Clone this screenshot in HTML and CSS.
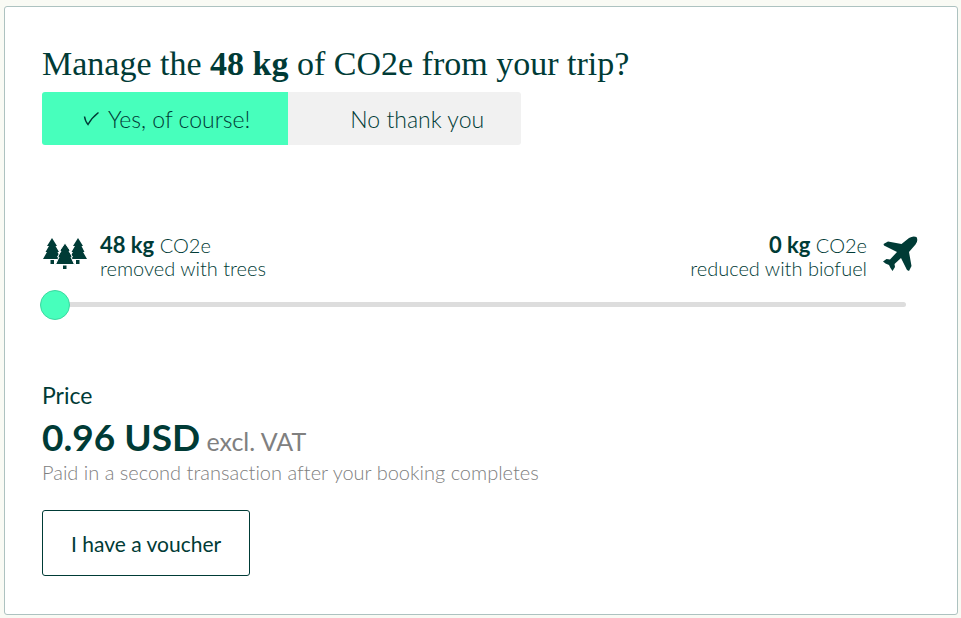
FILE: index.html
```html
<!DOCTYPE html>
<html lang="en">
<head>
    <meta charset="UTF-8">
    <meta name="viewport" content="width=device-width, initial-scale=1.0">
    <title>Manage your CO2e</title>
    <link rel="stylesheet" href="styles.css">
</head>
<body>
    <main class="card">
        <h1 class="title">Manage the <strong>48 kg</strong> of CO2e from your trip?</h1>

        <div class="choices">
            <button type="button" class="choice selected" aria-pressed="true">
                <span class="check">
                    <svg width="17" height="16" viewBox="0 0 17 16" aria-hidden="true">
                        <path d="M1.500 5.500C2 8.500 3 11.500 5 13.500C7.500 9 11 5 15.500 1.500" fill="none" stroke="currentColor" stroke-width="1.500"/>
                    </svg>
                </span>
                Yes, of course!
            </button>
            <button type="button" class="choice" aria-pressed="false">
                <span class="check"></span>
                No thank you
            </button>
        </div>

        <div class="split">
            <div class="side">
                <svg class="trees" width="44" height="32" viewBox="0 0 44 32" aria-hidden="true">
                    <path d="M9 0L14 8H12.500L16 14H14.500L18 21H0L4 14H2.500L6 8H4ZM7.500 22H11V26H7.500ZM35 0L40 8H38.500L41.500 14H40L44 21H26L30 14H28.500L32 8H30ZM33 22H36.500V26H33Z"/>
                    <path class="front" d="M22 5L27.500 13H26L29.500 19H28L31.500 26.500H12.500L16 19H14.500L18 13H16.500Z"/>
                    <path d="M20 27.500H23.500V31H20Z"/>
                </svg>
                <label for="split"><strong>48 kg</strong> CO2e<br>removed with trees</label>
            </div>
            <div class="side right">
                <label for="split"><strong>0 kg</strong> CO2e<br>reduced with biofuel</label>
                <svg class="plane" width="35" height="36" viewBox="0 0 35 36" aria-hidden="true">
                    <path d="M0.500 8L5 5.500L18.500 8L26 2Q30 -0.500 33.500 1Q35.500 4.500 32.500 8.500L26 16L28.500 30L26 35L24 34L18 22L11.500 28L12 31L9.500 35L7.500 32L6 29L2.500 27.500L0 25.500L3.500 23L7 23.500L14 16L1 9.500Z"/>
                </svg>
            </div>
        </div>
        <input type="range" id="split" class="slider" min="0" max="48" value="0">

        <section class="price">
            <h2 class="price-label">Price</h2>
            <p class="amount"><strong>0.96 USD</strong> excl. VAT</p>
            <p class="note">Paid in a second transaction after your booking completes</p>
        </section>

        <button type="button" class="voucher">I have a voucher</button>
    </main>
</body>
</html>
```
FILE: styles.css
```css
* {
    box-sizing: border-box;
}
body {
    margin: 0;
    padding: 6px 3px 3px 4px;
    background-color: #f9faf4;
    color: #003b36;
    font-family: Lato, sans-serif;
    font-weight: 400;
    font-variant-ligatures: none;
}
.card {
    padding: 37px 37px 38px;
    background-color: #fff;
    border: 1px solid #adc2c0;
    border-radius: 3px;
}
.title {
    margin: 0 0 8px;
    font-family: "Liberation Serif", serif;
    font-size: 34px;
    font-weight: 400;
    line-height: 40px;
}
.title strong {
    font-weight: 700;
}
button {
    font-family: inherit;
    color: inherit;
    cursor: pointer;
}

/* yes / no toggle */
.choices {
    display: flex;
    margin-bottom: 88px;
}
.choice {
    display: flex;
    align-items: center;
    padding: 0 37px;
    height: 53px;
    border: none;
    border-radius: 0 3px 3px 0;
    background-color: #f1f1f1;
    font-size: 23px;
    font-weight: 300;
}
.choice.selected {
    padding: 0 38px 0 41px;
    border-radius: 3px 0 0 3px;
    background-color: #47ffbc;
}
.check {
    width: 25px;
}
.check svg {
    display: block;
}

/* trees / biofuel split */
.split {
    display: flex;
    justify-content: space-between;
    font-size: 20px;
    font-weight: 300;
    line-height: 23px;
}
.side {
    display: flex;
    gap: 13px;
    padding-left: 1px;
}
.side.right {
    gap: 16px;
    padding-right: 2px;
    text-align: right;
}
.side strong {
    font-size: 22px;
    font-weight: 700;
}
.trees,
.plane {
    fill: #003b36;
}
.trees {
    margin-top: 5px;
}
.trees .front {
    stroke: #fff;
    stroke-width: 1;
}
.plane {
    margin-top: 3px;
}
.slider {
    -webkit-appearance: none;
    appearance: none;
    display: block;
    width: calc(100% - 12px);
    height: 30px;
    margin: 9px 0 63px -2px;
    background: none;
}
.slider::-webkit-slider-runnable-track {
    height: 5px;
    border-radius: 3px;
    background-color: #ddd;
}
.slider::-webkit-slider-thumb {
    -webkit-appearance: none;
    width: 30px;
    height: 30px;
    margin-top: -12px;
    border: 1px solid #3cd9a0;
    border-radius: 50%;
    background-color: #47ffbc;
}

.price {
    margin-bottom: 27px;
}
.price-label {
    margin: 0 0 9px;
    font-size: 23px;
    font-weight: 400;
    line-height: 26px;
}
.amount {
    margin: 0;
    color: #808080;
    font-size: 25px;
    line-height: 40px;
}
.amount strong {
    color: #003b36;
    font-size: 37px;
    font-weight: 700;
}
.note {
    margin: 0;
    color: #808080;
    font-size: 20px;
    font-weight: 300;
    line-height: 22px;
}
.voucher {
    display: block;
    height: 66px;
    padding: 0 28px;
    border: 1px solid #003b36;
    border-radius: 3px;
    background-color: #fff;
    font-size: 21px;
}
```
